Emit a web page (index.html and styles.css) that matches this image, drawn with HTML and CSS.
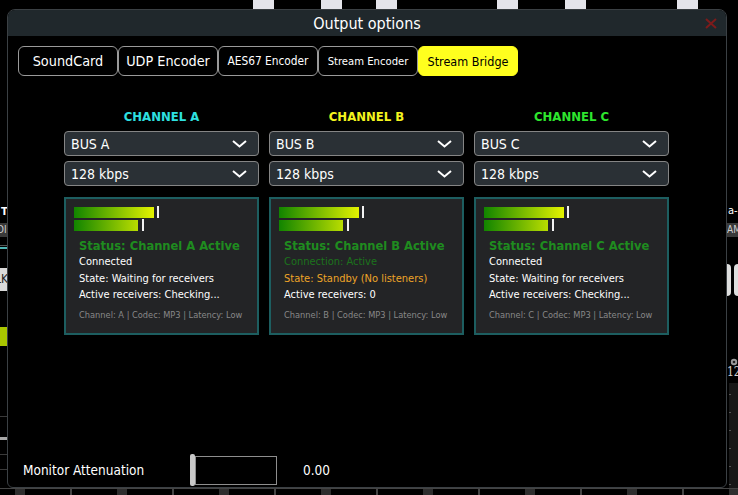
FILE: index.html
```html
<!DOCTYPE html>
<html lang="en">
  <head>
    <meta charset="UTF-8" />
    <meta name="viewport" content="width=device-width, initial-scale=1.0" />
    <title>Output options</title>
    <link rel="stylesheet" href="styles.css">
  </head>
  <body>
    <div class="caps">
      <span class="cap"></span>
      <span class="cap"></span>
      <span class="cap"></span>
      <span class="cap"></span>
      <span class="cap"></span>
      <span class="cap"></span>
    </div>

    <div class="stage">
      <div class="edge edge-left">
        <div class="strip-label">T</div>
        <div class="strip-box">DI</div>
        <div class="strip-line"></div>
        <div class="strip-teal"></div>
        <div class="strip-button">LK</div>
        <div class="strip-level"></div>
        <div class="strip-tick"></div>
        <div class="strip-tick strip-tick-light"></div>
        <div class="strip-tick"></div>
        <div class="strip-tick"></div>
      </div>

      <div class="modal">
        <div class="modal-title">
          <span></span>
          <span class="modal-caption">Output options</span>
          <span class="modal-close">
            <svg width="12" height="11" viewBox="0 0 12 11">
              <path d="M1 1 L11 10 M11 1 L1 10" stroke="#7d1b1b" stroke-width="2" fill="none" />
            </svg>
          </span>
        </div>

        <div class="modal-body">
          <div class="tabs">
            <div class="tab tab-lg">SoundCard</div>
            <div class="tab tab-lg">UDP Encoder</div>
            <div class="tab tab-md">AES67 Encoder</div>
            <div class="tab tab-sm">Stream Encoder</div>
            <div class="tab tab-md2 active">Stream Bridge</div>
          </div>

          <div class="channels">
            <div class="channel">
              <div class="channel-name name-a">CHANNEL A</div>
              <div class="select">
                <span>BUS A</span>
                <svg width="15" height="8" viewBox="0 0 15 8"><polyline points="1,1 7.5,6.5 14,1" fill="none" stroke="#fff" stroke-width="2" /></svg>
              </div>
              <div class="select">
                <span>128 kbps</span>
                <svg width="15" height="8" viewBox="0 0 15 8"><polyline points="1,1 7.5,6.5 14,1" fill="none" stroke="#fff" stroke-width="2" /></svg>
              </div>
              <div class="card">
                <div class="meter"><div class="bar" style="width: 80px"></div><div class="peak"></div></div>
                <div class="meter"><div class="bar" style="width: 64px"></div><div class="peak peak-far"></div></div>
                <div class="card-text">
                  <div class="status">Status: Channel A Active</div>
                  <div class="line">Connected</div>
                  <div class="line">State: Waiting for receivers</div>
                  <div class="line">Active receivers: Checking...</div>
                  <div class="info">Channel: A | Codec: MP3 | Latency: Low</div>
                </div>
              </div>
            </div>

            <div class="channel">
              <div class="channel-name name-b">CHANNEL B</div>
              <div class="select">
                <span>BUS B</span>
                <svg width="15" height="8" viewBox="0 0 15 8"><polyline points="1,1 7.5,6.5 14,1" fill="none" stroke="#fff" stroke-width="2" /></svg>
              </div>
              <div class="select">
                <span>128 kbps</span>
                <svg width="15" height="8" viewBox="0 0 15 8"><polyline points="1,1 7.5,6.5 14,1" fill="none" stroke="#fff" stroke-width="2" /></svg>
              </div>
              <div class="card">
                <div class="meter"><div class="bar" style="width: 80px"></div><div class="peak"></div></div>
                <div class="meter"><div class="bar" style="width: 64px"></div><div class="peak peak-far"></div></div>
                <div class="card-text">
                  <div class="status">Status: Channel B Active</div>
                  <div class="line line-dim">Connection: Active</div>
                  <div class="line line-warn">State: Standby (No listeners)</div>
                  <div class="line">Active receivers: 0</div>
                  <div class="info">Channel: B | Codec: MP3 | Latency: Low</div>
                </div>
              </div>
            </div>

            <div class="channel">
              <div class="channel-name name-c">CHANNEL C</div>
              <div class="select">
                <span>BUS C</span>
                <svg width="15" height="8" viewBox="0 0 15 8"><polyline points="1,1 7.5,6.5 14,1" fill="none" stroke="#fff" stroke-width="2" /></svg>
              </div>
              <div class="select">
                <span>128 kbps</span>
                <svg width="15" height="8" viewBox="0 0 15 8"><polyline points="1,1 7.5,6.5 14,1" fill="none" stroke="#fff" stroke-width="2" /></svg>
              </div>
              <div class="card">
                <div class="meter"><div class="bar" style="width: 80px"></div><div class="peak"></div></div>
                <div class="meter"><div class="bar" style="width: 64px"></div><div class="peak peak-far"></div></div>
                <div class="card-text">
                  <div class="status">Status: Channel C Active</div>
                  <div class="line">Connected</div>
                  <div class="line">State: Waiting for receivers</div>
                  <div class="line">Active receivers: Checking...</div>
                  <div class="info">Channel: C | Codec: MP3 | Latency: Low</div>
                </div>
              </div>
            </div>
          </div>

          <div class="monitor">
            <div class="monitor-label">Monitor Attenuation</div>
            <div class="slider">
              <div class="slider-thumb"></div>
              <div class="slider-box"></div>
            </div>
            <div class="monitor-value">0.00</div>
          </div>
        </div>
      </div>

      <div class="edge edge-right">
        <div class="strip-label">a-</div>
        <div class="strip-box">AM</div>
        <div class="strip-pills"><span class="pill pill-left"></span><span class="pill pill-right"></span></div>
        <div class="strip-gear">
          <svg width="8" height="8" viewBox="0 0 8 8"><circle cx="4" cy="4" r="3.2" fill="#9a9a9a" /><circle cx="4" cy="4" r="1.3" fill="#222" /></svg>
        </div>
        <div class="strip-number">12</div>
        <div class="strip-scale"></div>
      </div>
    </div>

    <div class="floor"></div>
  </body>
</html>
```

FILE: styles.css
```css
body {
  margin: 0;
  width: 738px;
  height: 495px;
  overflow: hidden;
  background-color: #000;
  color: #fff;
  font-family: "DejaVu Sans Condensed", "DejaVu Sans", sans-serif;
  font-stretch: condensed;
}

/* mixer behind the dialog */
.caps {
  display: flex;
  height: 9px;
  padding-left: 253px;
}

.cap {
  width: 21px;
  height: 9px;
  background-color: #e4e4ea;
}

.cap:nth-child(2) { margin-left: 47px; }
.cap:nth-child(3) { margin-left: 34px; }
.cap:nth-child(4) { margin-left: 100px; }
.cap:nth-child(5) { margin-left: 47px; }
.cap:nth-child(6) { margin-left: 91px; }

.stage {
  display: flex;
  height: 479px;
}

.edge {
  display: flex;
  flex-direction: column;
  overflow: hidden;
  white-space: nowrap;
}

.edge-left {
  width: 7px;
}

.edge-right {
  width: 11px;
}

.strip-label {
  height: 14px;
  margin-top: 196px;
  font-size: 11px;
  font-weight: bold;
  line-height: 14px;
  padding-left: 1px;
}

.edge-right .strip-label {
  margin-top: 195px;
  padding-left: 1px;
  font-weight: normal;
}

.strip-box {
  height: 14px;
  margin-top: 4px;
  background-color: #3a3a3a;
  color: #cfcfcf;
  font-size: 10px;
  line-height: 14px;
  text-indent: -3px;
}

.edge-right .strip-box {
  margin-top: 5px;
  text-indent: 0;
}

.strip-line {
  height: 1px;
  margin-top: 8px;
  background-color: #555;
}

.strip-teal {
  height: 2px;
  margin-top: 1px;
  background-color: #4fb4b4;
}

.strip-button {
  height: 23px;
  margin-top: 19px;
  background-color: #d9d9d9;
  color: #222;
  font-size: 12px;
  line-height: 23px;
  text-indent: -5px;
}

.strip-level {
  height: 19px;
  margin-top: 36px;
  background-color: #a9c600;
}

.strip-tick {
  height: 1px;
  margin-top: 14px;
  background-color: #3a3a3a;
}

.strip-tick:nth-of-type(7) { margin-top: 70px; }

.strip-tick-light {
  height: 3px;
  margin-top: 20px;
  background-color: #a8a8a8;
}

.strip-pills {
  display: flex;
  gap: 3px;
  height: 32px;
  margin-top: 27px;
}

.pill {
  height: 32px;
  background-color: #dedede;
}

.pill-left {
  width: 5px;
  border-radius: 0 6px 6px 0;
}

.pill-right {
  width: 6px;
  border-radius: 6px 0 0 6px;
}

.strip-gear {
  height: 8px;
  margin-top: 55px;
  padding-left: 3px;
}

.strip-number {
  margin-top: 6px;
  height: 14px;
  font-family: "DejaVu Serif", serif;
  font-size: 12px;
  line-height: 14px;
  color: #d0d0d0;
}

.strip-scale {
  flex: 1;
  margin-top: 4px;
  margin-left: 2px;
  background:
    repeating-linear-gradient(to bottom, transparent 0 11px, #555 11px 12px, transparent 12px 18px) left / 2px 100% no-repeat,
    #171717;
}

.floor {
  height: 7px;
  box-sizing: border-box;
  border-top: 1px solid #444;
  background:
    repeating-linear-gradient(to right, transparent 0 15px, #2e2e2e 15px 25px, transparent 25px 70px, #444 70px 72px, transparent 72px 102px);
}

/* dialog */
.modal {
  display: flex;
  flex-direction: column;
  width: 720px;
  box-sizing: border-box;
  border: 1px solid #3b4044;
  border-radius: 8px 8px 6px 6px;
  background-color: #000;
  overflow: hidden;
}

.modal-title {
  display: grid;
  grid-template-columns: 1fr auto 1fr;
  align-items: center;
  height: 26px;
  background-color: #20282c;
}

.modal-caption {
  font-size: 16px;
}

.modal-close {
  justify-self: end;
  display: flex;
  padding-right: 9px;
}

.modal-body {
  display: flex;
  flex-direction: column;
  flex: 1;
  padding: 10px 10px 1px;
}

.tabs {
  display: flex;
}

.tab {
  display: flex;
  align-items: center;
  justify-content: center;
  width: 100px;
  height: 30px;
  box-sizing: border-box;
  border: 1px solid #9a9a9a;
  border-radius: 6px;
  white-space: nowrap;
}

.tab-lg { font-size: 14.3px; }
.tab-md { font-size: 11.8px; }
.tab-sm { font-size: 11.2px; }
.tab-md2 { font-size: 12.5px; }

.tab.active {
  background-color: #ffff1e;
  border-color: #ffff1e;
  color: #000;
}

.channels {
  display: grid;
  grid-template-columns: repeat(3, 195px);
  gap: 10px;
  margin-top: 33px;
  margin-left: 46px;
}

.channel-name {
  height: 16px;
  font-size: 13px;
  font-weight: bold;
  line-height: 16px;
  text-align: center;
}

.name-a { color: #2ee0e0; }
.name-b { color: #f4f41e; }
.name-c { color: #2ee62e; }

.select {
  display: flex;
  align-items: center;
  justify-content: space-between;
  height: 25px;
  box-sizing: border-box;
  margin-top: 5px;
  padding: 0 11px 0 6px;
  background-color: #2a3035;
  border: 1px solid #858585;
  border-radius: 4px;
  font-size: 14px;
}

.channel-name + .select {
  margin-top: 6px;
}

.card {
  margin-top: 11px;
  padding: 7px 8px 12px;
  background-color: #232426;
  border: 2px solid #1d5e60;
}

.meter {
  display: flex;
  align-items: center;
  gap: 3px;
  height: 12px;
  margin-bottom: 1px;
}

.bar {
  height: 11px;
  background-image: linear-gradient(to right, #118400, #eef800);
  background-size: 84px 100%;
}

.peak {
  width: 2px;
  height: 12px;
  background-color: #f2f2f2;
}

.peak-far {
  margin-left: 1px;
}

.card-text {
  padding-left: 5px;
}

.status {
  margin-top: 6px;
  font-size: 12.8px;
  font-weight: bold;
  line-height: 17px;
  color: #1f8c1f;
  white-space: nowrap;
}

.line {
  font-size: 11px;
  line-height: 16.5px;
  white-space: nowrap;
}

.line-dim { color: #1c731c; }
.line-warn { color: #eea428; }

.info {
  margin-top: 5px;
  font-size: 9.2px;
  line-height: 12px;
  color: #888;
  white-space: nowrap;
}

.monitor {
  display: flex;
  align-items: center;
  margin-top: auto;
  padding-left: 5px;
  font-size: 13.5px;
}

.monitor-label {
  width: 167px;
}

.slider {
  display: flex;
  align-items: center;
}

.slider-thumb {
  width: 5px;
  height: 32px;
  background-color: #c9c9c9;
  border-radius: 2px;
}

.slider-box {
  width: 82px;
  height: 29px;
  box-sizing: border-box;
  border: 1px solid #8e8e8e;
}

.monitor-value {
  margin-left: 26px;
}
```
